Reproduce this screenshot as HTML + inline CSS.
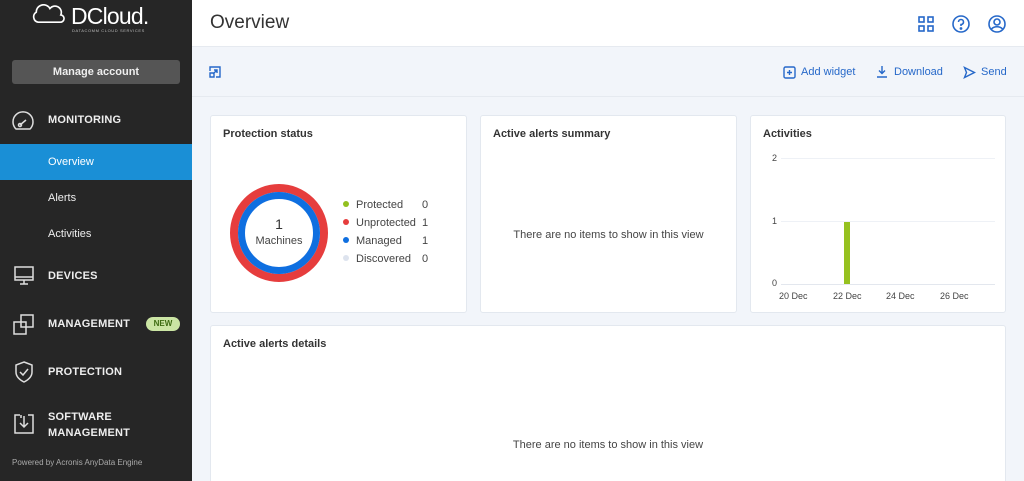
<!DOCTYPE html>
<html style="width:1024px;height:481px;overflow:hidden"><head><style>
*{margin:0;padding:0;box-sizing:border-box}
body{width:1024px;height:481px;overflow:hidden;font-family:"Liberation Sans",sans-serif;background:#f2f5fa;position:relative}
.sb{position:absolute;left:0;top:0;width:192px;height:481px;background:#262626;color:#fff}
.abs{position:absolute}
.nav{position:absolute;left:48px;font-size:11px;font-weight:bold;color:#eee;letter-spacing:.2px}
.sub{position:absolute;left:48px;font-size:11px;color:#eee}
.card{position:absolute;background:#fff;border:1px solid #e3e8ef;border-radius:3px}
.ct{position:absolute;left:12px;top:12px;font-size:11px;font-weight:bold;color:#333}
.empty{position:absolute;width:100%;text-align:center;font-size:11px;color:#444}
.blue{color:#2668c9}
.lg{position:absolute;font-size:11px;color:#444}
.dot{display:inline-block;width:6px;height:6px;border-radius:50%;margin-right:7px;vertical-align:1px}
.ax{position:absolute;font-size:9px;color:#444}
</style></head><body>
<div class="sb">
  <svg class="abs" style="left:30px;top:4px" width="38" height="20" viewBox="0 0 40 22"><path d="M8 20 A6 6 0 0 1 6 9 A8 8 0 0 1 21 5 A7 7 0 0 1 33 12 A4 4 0 0 1 32 20 Z" fill="none" stroke="#fff" stroke-width="1.8"/></svg>
  <div class="abs" style="left:71px;top:3px;font-size:23px;color:#fff;letter-spacing:-.8px">DCloud.</div>
  <div class="abs" style="left:72px;top:28px;font-size:4px;color:#bbb;letter-spacing:.6px">DATACOMM CLOUD SERVICES</div>
  <div class="abs" style="left:12px;top:60px;width:168px;height:24px;background:#555;border-radius:3px;font-size:11px;font-weight:bold;color:#eee;text-align:center;line-height:24px">Manage account</div>
  <svg class="abs" style="left:11px;top:109px" width="24" height="22" viewBox="0 0 24 22" fill="none" stroke="#ddd" stroke-width="1.5"><path d="M5 20 A10 10 0 1 1 19 20 Z"/><path d="M9 16 L15 11"/><circle cx="9" cy="16" r="1.5"/></svg>
  <div class="nav" style="top:114px">MONITORING</div>
  <div class="abs" style="left:0;top:144px;width:192px;height:36px;background:#1a8fd6"></div>
  <div class="sub" style="top:156px;color:#fff">Overview</div>
  <div class="sub" style="top:192px">Alerts</div>
  <div class="sub" style="top:228px">Activities</div>
  <svg class="abs" style="left:13px;top:265px" width="22" height="22" viewBox="0 0 22 22" fill="none" stroke="#ddd" stroke-width="1.5"><rect x="2" y="2" width="18" height="13"/><path d="M2 12H20M11 15V19M7 19H15"/></svg>
  <div class="nav" style="top:270px">DEVICES</div>
  <svg class="abs" style="left:12px;top:313px" width="24" height="24" viewBox="0 0 24 24" fill="none" stroke="#ddd" stroke-width="1.5"><rect x="2" y="9" width="12" height="12"/><rect x="9" y="2" width="12" height="12"/></svg>
  <div class="nav" style="top:318px">MANAGEMENT</div>
  <div class="abs" style="left:146px;top:317px;width:34px;height:14px;background:#cbe5a4;border-radius:7px;font-size:8px;font-weight:bold;color:#3d6b12;text-align:center;line-height:14px">NEW</div>
  <svg class="abs" style="left:14px;top:361px" width="20" height="22" viewBox="0 0 20 22" fill="none" stroke="#ddd" stroke-width="1.5"><path d="M10 1 L18 4 V11 C18 16 14 19 10 21 C6 19 2 16 2 11 V4 Z"/><path d="M6 11 L9 14 L14 8"/></svg>
  <div class="nav" style="top:366px">PROTECTION</div>
  <svg class="abs" style="left:13px;top:413px" width="22" height="22" viewBox="0 0 22 22" fill="none" stroke="#ddd" stroke-width="1.5"><path d="M7 2H2V20H20V2H15M11 3V14M7 10L11 14L15 10M8 5V2"/></svg>
  <div class="nav" style="top:409px;line-height:16px">SOFTWARE<br>MANAGEMENT</div>
  <div class="abs" style="left:12px;top:458px;font-size:8px;color:#aaa">Powered by Acronis AnyData Engine</div>
</div>
<div class="abs" style="left:192px;top:0;width:832px;height:47px;background:#fff;border-bottom:1px solid #e6eaf0"></div>
<div class="abs" style="left:210px;top:12px;font-size:19px;color:#333">Overview</div>
<svg class="abs" style="left:917px;top:15px" width="18" height="18" viewBox="0 0 18 18" fill="none" stroke="#2668c9" stroke-width="1.6"><rect x="2" y="2" width="5" height="5"/><rect x="11" y="2" width="5" height="5"/><rect x="2" y="11" width="5" height="5"/><rect x="11" y="11" width="5" height="5"/></svg>
<svg class="abs" style="left:951px;top:14px" width="20" height="20" viewBox="0 0 20 20" fill="none" stroke="#2668c9" stroke-width="1.6"><circle cx="10" cy="10" r="8"/><path d="M7.5 8 A2.5 2.5 0 1 1 10 10.5 V12"/><circle cx="10" cy="14.5" r=".6" fill="#2668c9"/></svg>
<svg class="abs" style="left:987px;top:14px" width="20" height="20" viewBox="0 0 20 20" fill="none" stroke="#2668c9" stroke-width="1.6"><circle cx="10" cy="10" r="8"/><circle cx="10" cy="8" r="3"/><path d="M4.5 15 C7 12 13 12 15.5 15"/></svg>
<svg class="abs" style="left:209px;top:66px" width="12" height="12" viewBox="0 0 12 12" fill="none" stroke="#2668c9" stroke-width="1.4"><path d="M1 5V1H11V11H7M1 7H5V11H1Z M4 8L8 4M5 4H8V7"/></svg>
<svg class="abs" style="left:783px;top:66px" width="13" height="13" viewBox="0 0 13 13" fill="none" stroke="#2668c9" stroke-width="1.4"><rect x="1" y="1" width="11" height="11" rx="1.5"/><path d="M6.5 4V9M4 6.5H9"/></svg>
<div class="abs blue" style="left:801px;top:66px;font-size:11px">Add widget</div>
<svg class="abs" style="left:876px;top:65px" width="12" height="13" viewBox="0 0 12 13" fill="none" stroke="#2668c9" stroke-width="1.4"><path d="M6 1V8M3 5.5L6 8.5L9 5.5M1 12H11"/></svg>
<div class="abs blue" style="left:894px;top:66px;font-size:11px">Download</div>
<svg class="abs" style="left:963px;top:66px" width="13" height="13" viewBox="0 0 13 13" fill="none" stroke="#2668c9" stroke-width="1.4"><path d="M1.5 1.5L11.5 6.5L1.5 11.5L3.5 6.5Z"/></svg>
<div class="abs blue" style="left:981px;top:66px;font-size:11px">Send</div>
<div class="abs" style="left:192px;top:96px;width:832px;height:1px;background:#e6eaf0"></div>

<div class="card" style="left:210px;top:115px;width:257px;height:198px">
  <div class="ct">Protection status</div>
  <svg class="abs" style="left:18px;top:67px" width="100" height="100" viewBox="0 0 100 100"><circle cx="50" cy="50" r="45" fill="none" stroke="#e63d3d" stroke-width="8"/><circle cx="50" cy="50" r="37.5" fill="none" stroke="#0f6fe0" stroke-width="7"/></svg>
  <div class="abs" style="left:18px;top:100px;width:100px;text-align:center;font-size:14px;color:#333">1</div>
  <div class="abs" style="left:18px;top:119px;width:100px;text-align:center;font-size:11px;color:#444">Machines</div>
  <div class="lg" style="left:132px;top:83px"><span class="dot" style="background:#92c01f"></span>Protected</div>
  <div class="lg" style="left:132px;top:101px"><span class="dot" style="background:#e63d3d"></span>Unprotected</div>
  <div class="lg" style="left:132px;top:119px"><span class="dot" style="background:#0f6fe0"></span>Managed</div>
  <div class="lg" style="left:132px;top:137px"><span class="dot" style="background:#dde3ee"></span>Discovered</div>
  <div class="lg" style="left:211px;top:83px">0</div><div class="lg" style="left:211px;top:101px">1</div><div class="lg" style="left:211px;top:119px">1</div><div class="lg" style="left:211px;top:137px">0</div>
</div>
<div class="card" style="left:480px;top:115px;width:257px;height:198px">
  <div class="ct">Active alerts summary</div>
  <div class="empty" style="top:113px">There are no items to show in this view</div>
</div>
<div class="card" style="left:750px;top:115px;width:256px;height:198px">
  <div class="ct">Activities</div>
  <div class="ax" style="left:21px;top:37px">2</div><div class="ax" style="left:21px;top:100px">1</div><div class="ax" style="left:21px;top:162px">0</div>
  <div class="abs" style="left:30px;top:42px;width:214px;height:1px;background:#eef1f6"></div>
  <div class="abs" style="left:30px;top:105px;width:214px;height:1px;background:#eef1f6"></div>
  <div class="abs" style="left:30px;top:168px;width:214px;height:1px;background:#e3e7ee"></div>
  <div class="abs" style="left:93px;top:106px;width:6px;height:62px;background:#96c11f"></div>
  <div class="ax" style="left:28px;top:175px">20 Dec</div><div class="ax" style="left:82px;top:175px">22 Dec</div><div class="ax" style="left:135px;top:175px">24 Dec</div><div class="ax" style="left:189px;top:175px">26 Dec</div>
</div>
<div class="card" style="left:210px;top:325px;width:796px;height:170px">
  <div class="ct">Active alerts details</div>
  <div class="empty" style="top:113px">There are no items to show in this view</div>
</div>
</body></html>
